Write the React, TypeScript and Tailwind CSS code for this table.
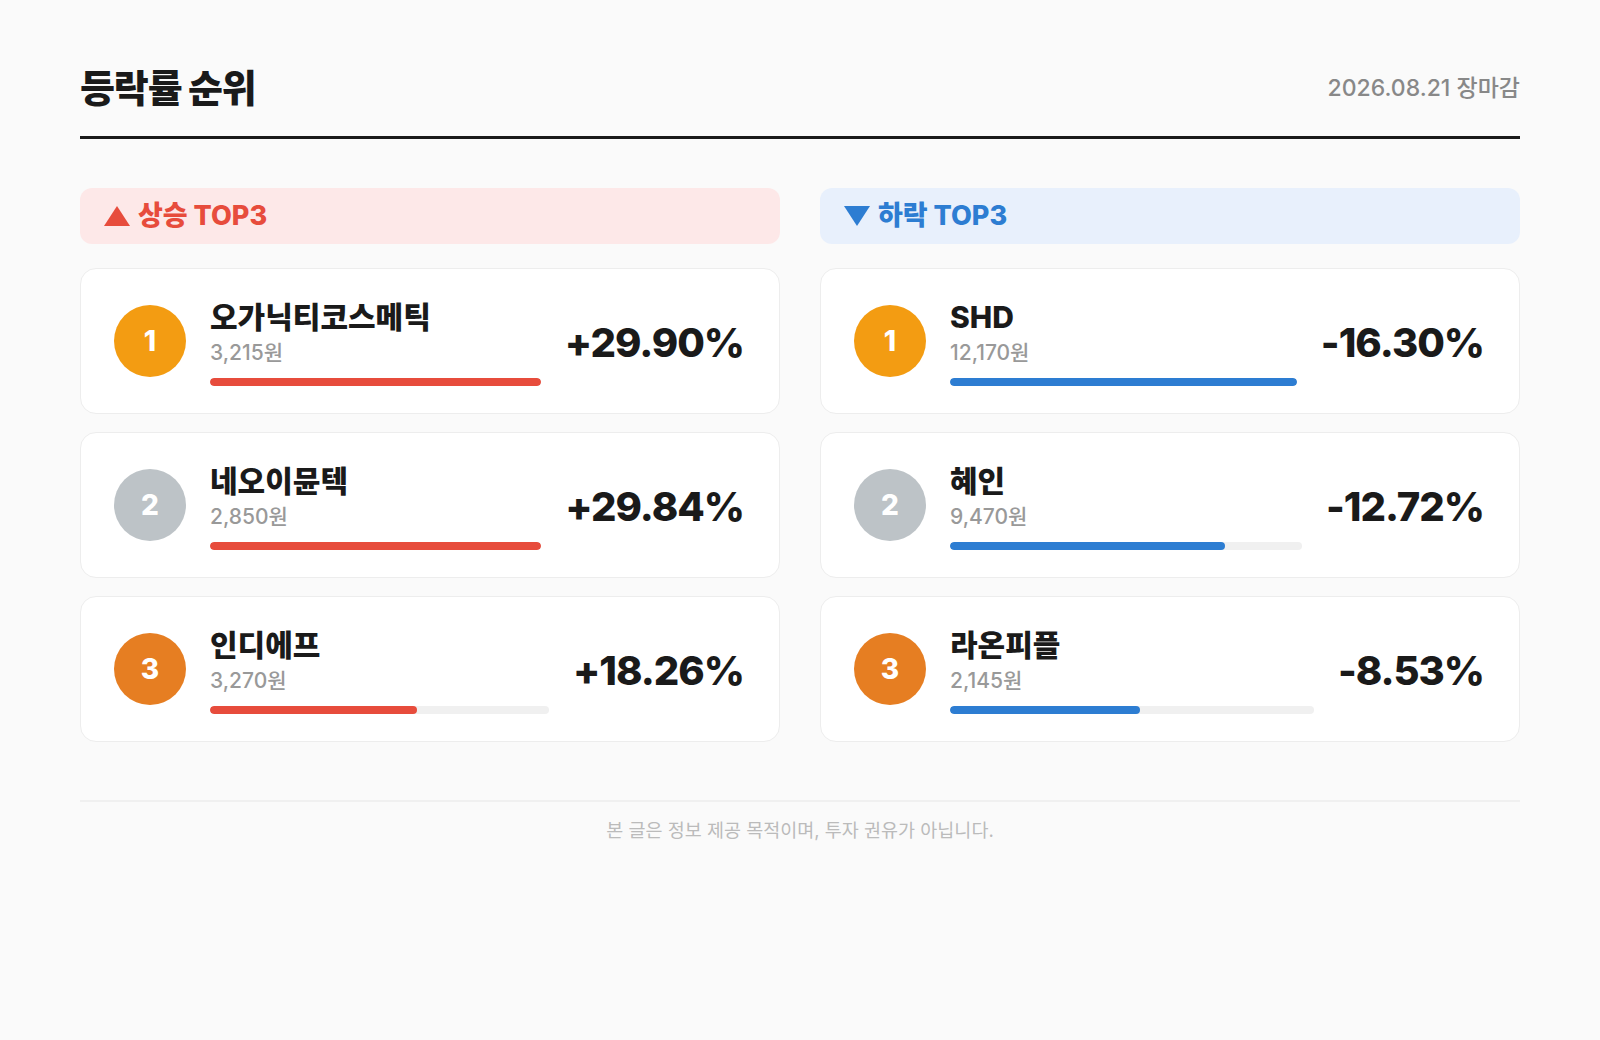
import React from "react";

type Item = { name: string; price: string; pct: string; value: number };

const up: Item[] = [
  { name: "오가닉티코스메틱", price: "3,215원", pct: "+29.90%", value: 29.9 },
  { name: "네오이뮨텍", price: "2,850원", pct: "+29.84%", value: 29.84 },
  { name: "인디에프", price: "3,270원", pct: "+18.26%", value: 18.26 },
];

const down: Item[] = [
  { name: "SHD", price: "12,170원", pct: "-16.30%", value: 16.3 },
  { name: "혜인", price: "9,470원", pct: "-12.72%", value: 12.72 },
  { name: "라온피플", price: "2,145원", pct: "-8.53%", value: 8.53 },
];

const rankBg = ["bg-[#f39c12]", "bg-[#bdc3c7]", "bg-[#e67e22]"];

function Card({ item, rank, max, barClass }: { item: Item; rank: number; max: number; barClass: string }) {
  return (
    <div className="flex h-[146px] items-center gap-6 rounded-[16px] border border-[#ededed] bg-white pl-[33px] pr-[35px]">
      <div
        className={`flex h-[72px] w-[72px] shrink-0 items-center justify-center rounded-full ${rankBg[rank]} text-[28px] font-extrabold text-white`}
      >
        {rank + 1}
      </div>
      <div className="flex min-w-0 flex-1 flex-col">
        <div className="text-[30px] leading-[40px] font-extrabold text-[#1a1a1a]">{item.name}</div>
        <div className="mt-[2px] text-[21px] leading-[28px] font-medium text-[#999999]">{item.price}</div>
        <div className="mt-[11px] h-2 w-full overflow-hidden rounded-full bg-[#f0f0f0]">
          <div className={`h-full rounded-full ${barClass}`} style={{ width: `${(item.value / max) * 100}%` }} />
        </div>
      </div>
      <div className="mt-[3px] shrink-0 text-[40px] leading-[48px] font-extrabold tracking-[-0.025em] text-[#1a1a1a]">
        {item.pct}
      </div>
    </div>
  );
}

function Column({
  items,
  title,
  dir,
}: {
  items: Item[];
  title: string;
  dir: "up" | "down";
}) {
  const max = Math.max(...items.map((i) => i.value));
  const isUp = dir === "up";
  return (
    <div className="flex flex-col">
      <div
        className={`flex h-14 items-center gap-[8px] rounded-[12px] px-6 ${
          isUp ? "bg-[#fde8e8] text-[#e74c3c]" : "bg-[#e8f0fc] text-[#2d7dd2]"
        }`}
      >
        <svg width="26" height="20" viewBox="0 0 26 20" className="shrink-0">
          {isUp ? (
            <polygon points="13,0 26,20 0,20" fill="currentColor" />
          ) : (
            <polygon points="0,0 26,0 13,20" fill="currentColor" />
          )}
        </svg>
        <span className="text-[27px] leading-[32px] font-extrabold">{title}</span>
      </div>
      <div className="mt-6 flex flex-col gap-[18px]">
        {items.map((it, i) => (
          <Card key={it.name} item={it} rank={i} max={max} barClass={isUp ? "bg-[#e74c3c]" : "bg-[#2d7dd2]"} />
        ))}
      </div>
    </div>
  );
}

export default function App() {
  return (
    <div className="min-h-[1040px] w-full bg-[#fafafa] font-[Inter,'Noto_Sans_CJK_KR',sans-serif]">
      <div className="mx-auto w-[1440px] pt-16">
        <div className="flex items-center justify-between border-b-[3px] border-[#1a1a1a] pb-6">
          <h1 className="text-[38px] leading-[48px] font-black tracking-[-0.03em] text-[#1a1a1a]">등락률 순위</h1>
          <div className="text-[23px] leading-[30px] font-medium text-[#888888]">2026.08.21 장마감</div>
        </div>
        <div className="mt-[49px] grid grid-cols-2 gap-10">
          <Column items={up} title="상승 TOP3" dir="up" />
          <Column items={down} title="하락 TOP3" dir="down" />
        </div>
        <div className="mt-[58px] border-t-2 border-[#f0f0f0] pt-4 text-center text-[18.5px] leading-[24px] text-[#bbbbbb]">
          본 글은 정보 제공 목적이며, 투자 권유가 아닙니다.
        </div>
      </div>
    </div>
  );
}
